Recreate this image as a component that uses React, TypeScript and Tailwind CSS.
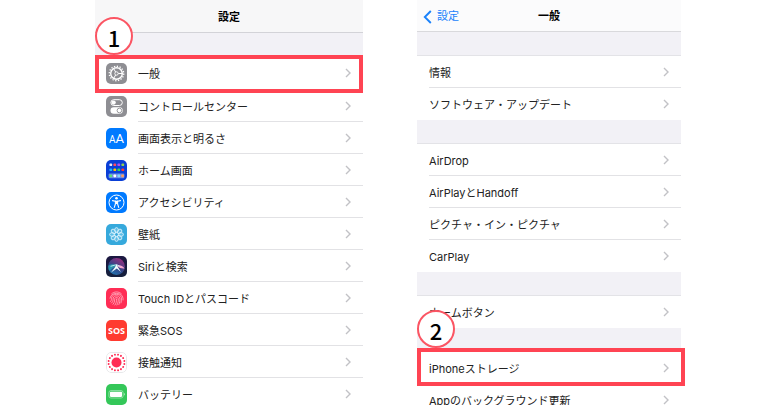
import type { ReactNode } from "react"
import clsx from "clsx"

const GearIcon = () => (
  <svg viewBox="0 0 21 21" className="size-full" fill="none" stroke="#fff">
    <rect width="21" height="21" fill="#8e8e93" stroke="none" />
    <circle cx="10.5" cy="10.5" r="7.2" strokeWidth="1.4" strokeDasharray="1.3 1.53" />
    <circle cx="10.5" cy="10.5" r="5.8" strokeWidth="1.4" />
    <circle cx="10.5" cy="10.5" r="1.7" strokeWidth="0.9" />
    <path d="M12.3 10.5h4M9.6 9 7.6 5.5M9.6 12l-2 3.5" strokeWidth="1" />
  </svg>
)

const TogglesIcon = () => (
  <svg viewBox="0 0 21 21" className="size-full" fill="none">
    <rect width="21" height="21" fill="#8e8e93" />
    <rect x="4.9" y="3.7" width="11.4" height="5.8" rx="2.9" stroke="#fff" strokeWidth="1" />
    <circle cx="7.7" cy="6.6" r="2.1" fill="#fff" />
    <rect x="4.5" y="11.2" width="12.2" height="6.6" rx="3.3" fill="#fff" />
    <circle cx="13.4" cy="14.5" r="2.3" stroke="#8e8e93" strokeWidth="0.9" />
  </svg>
)

const DisplayIcon = () => (
  <span className="flex size-full items-baseline justify-center bg-[#007aff] font-['Roboto',sans-serif] leading-[22px] text-white">
    <span className="text-[10px]">A</span>
    <span className="text-[13px]">A</span>
  </span>
)

const homeDots = [
  ["#e8e6f5", "#ff4a5e", "#b44df0", "#8fd14f"],
  ["#19b5fe", "#ffc400", "#35d05f", "#ff3b30"],
]

const HomeIcon = () => (
  <svg viewBox="0 0 21 21" className="size-full">
    <rect width="21" height="21" fill="#0a3fd6" />
    {homeDots.map((row, y) =>
      row.map((color, x) => (
        <rect key={`${x}-${y}`} x={3.5 + x * 4} y={3.5 + y * 5} width="2.6" height="2.6" rx="0.7" fill={color} />
      ))
    )}
    <rect x="2.6" y="13.6" width="15.8" height="4.6" rx="1.2" fill="#6f8fe8" />
    <rect x="3.5" y="14.6" width="2.6" height="2.6" rx="0.7" fill="#5ee07a" />
    <rect x="7.5" y="14.6" width="2.6" height="2.6" rx="0.7" fill="#fff" />
    <rect x="11.5" y="14.6" width="2.6" height="2.6" rx="0.7" fill="#7fd4ff" />
    <rect x="15.3" y="14.6" width="2.6" height="2.6" rx="0.7" fill="#ff9d5c" />
  </svg>
)

const AccessibilityIcon = () => (
  <svg viewBox="0 0 21 21" className="size-full" fill="none" stroke="#fff">
    <rect width="21" height="21" fill="#007aff" stroke="none" />
    <circle cx="10.5" cy="10.5" r="7.5" strokeWidth="1" />
    <circle cx="10.5" cy="6.3" r="1.3" fill="#fff" stroke="none" />
    <path d="M6.5 8.6 9.4 9.2h2.2l2.9-.6" strokeWidth="1.1" strokeLinecap="round" />
    <path d="M9.4 9v3L8.3 15.4M11.6 9v3l1.1 3.4" strokeWidth="1.1" strokeLinecap="round" />
    <path d="M10.5 9v3" strokeWidth="1.6" />
  </svg>
)

const WallpaperIcon = () => (
  <svg viewBox="0 0 21 21" className="size-full" fill="none" stroke="#e9f8ff">
    <rect width="21" height="21" fill="#36a9dc" stroke="none" />
    {[0, 45, 90, 135, 180, 225, 270, 315].map((angle) => (
      <ellipse
        key={angle}
        cx="10.5"
        cy="6.2"
        rx="1.9"
        ry="2.6"
        fill="#8fd3f0"
        fillOpacity="0.45"
        strokeWidth="0.8"
        transform={`rotate(${angle} 10.5 10.5)`}
      />
    ))}
    <circle cx="10.5" cy="10.5" r="1.9" strokeWidth="0.8" fill="#36a9dc" />
  </svg>
)

const SiriIcon = () => (
  <svg viewBox="0 0 21 21" className="size-full" fill="none">
    <defs>
      <linearGradient id="siri-bg" x1="0" y1="0" x2="0" y2="1">
        <stop offset="0" stopColor="#1c1741" />
        <stop offset="1" stopColor="#15203c" />
      </linearGradient>
      <linearGradient id="siri-orb" x1="0.2" y1="1" x2="0.8" y2="0">
        <stop offset="0" stopColor="#1f8fd0" />
        <stop offset="0.45" stopColor="#3a4f9c" />
        <stop offset="1" stopColor="#c0308c" />
      </linearGradient>
    </defs>
    <rect width="21" height="21" fill="url(#siri-bg)" />
    <circle cx="10.5" cy="10.5" r="8.4" fill="url(#siri-orb)" fillOpacity="0.8" />
    <path d="M2.6 9.4C6 7.6 9 8 10.6 10.2 8 11 4.5 13.6 3.2 14.6 2.3 13 2.2 11 2.6 9.4Z" fill="#27c3c0" fillOpacity="0.6" />
    <path d="M11 9.8C14 8.4 17 10.4 18.6 12.4 16.2 12.6 13.5 12.4 11 9.8Z" fill="#f7a6cf" />
    <path d="M10.6 8.2 12 11.2 15 16 10.8 12.6 5 16.6 8.8 11.6Z" fill="#effcff" />
    <path d="M4.6 10.3 10.6 8.6 13.6 10.2" stroke="#c8f5f5" strokeWidth="0.9" />
  </svg>
)

const TouchIdIcon = () => (
  <svg viewBox="0 0 21 21" className="size-full" fill="none" stroke="#ffb3c3" strokeWidth="0.8" strokeLinecap="round">
    <rect width="21" height="21" fill="#ff2d55" stroke="none" />
    <path d="M5.6 5.8C8.3 3.2 12.7 3.2 15.4 5.8" />
    <path d="M4 10.2C4.6 3.6 16.4 3.6 17 10.2V12" />
    <path d="M4.4 13.6C6 12.2 5.3 10.7 5.6 9.6 6.6 5.2 14.4 5.2 15.4 9.6 15.7 11.4 15.5 13.2 15 14.9" />
    <path d="M5.6 15C7.7 13 6.9 11.2 7.2 10 8 7.1 13 7.1 13.8 10 14.2 12.2 13.7 14.5 12.9 16.5" />
    <path d="M7 16.3C9.3 14 8.3 11.7 8.8 10.5 9.5 9 11.6 9 12.2 10.5 12.6 12.7 12 15 10.9 17" />
    <path d="M10.5 11C10.7 13.5 10.1 15.4 8.9 17" />
  </svg>
)

const SosIcon = () => (
  <span className="flex size-full items-center justify-center bg-[#ff3b30] font-['Open_Sans',sans-serif] text-[9px] font-bold leading-none text-white">
    SOS
  </span>
)

const ExposureIcon = () => (
  <svg viewBox="0 0 21 21" className="size-full">
    <rect x="0.5" y="0.5" width="20" height="20" rx="4.5" fill="#fff" stroke="#e8e8ea" />
    <circle cx="10.5" cy="10.5" r="5" fill="#ff2d55" />
    {Array.from({ length: 16 }, (_, i) => (
      <circle key={i} cx="10.5" cy="2.5" r="1" fill="#ff2d55" transform={`rotate(${i * 22.5 + 11.25} 10.5 10.5)`} />
    ))}
  </svg>
)

const BatteryIcon = () => (
  <svg viewBox="0 0 21 21" className="size-full">
    <rect width="21" height="21" fill="#34c759" />
    <rect x="2.9" y="6.6" width="14.2" height="7.4" rx="2" fill="none" stroke="#a5e6b5" strokeWidth="0.8" />
    <rect x="4" y="7.7" width="12" height="5.2" rx="0.8" fill="#fff" />
    <path d="M18 9v2.6c1.3-.4 1.3-2.2 0-2.6Z" fill="#a5e6b5" />
  </svg>
)

const Chevron = () => (
  <svg viewBox="0 0 6 10" className="h-2.5 w-1.5 shrink-0" fill="none" stroke="#c2c2c6" strokeWidth="1.4">
    <path d="M1 1l4 4-4 4" />
  </svg>
)

type Item = { label: string; icon?: ReactNode; step?: number }

const settings: Item[] = [
  { label: "一般", icon: <GearIcon />, step: 1 },
  { label: "コントロールセンター", icon: <TogglesIcon /> },
  { label: "画面表示と明るさ", icon: <DisplayIcon /> },
  { label: "ホーム画面", icon: <HomeIcon /> },
  { label: "アクセシビリティ", icon: <AccessibilityIcon /> },
  { label: "壁紙", icon: <WallpaperIcon /> },
  { label: "Siriと検索", icon: <SiriIcon /> },
  { label: "Touch IDとパスコード", icon: <TouchIdIcon /> },
  { label: "緊急SOS", icon: <SosIcon /> },
  { label: "接触通知", icon: <ExposureIcon /> },
  { label: "バッテリー", icon: <BatteryIcon /> },
]

const general: Item[][] = [
  [{ label: "情報" }, { label: "ソフトウェア・アップデート" }],
  [{ label: "AirDrop" }, { label: "AirPlayとHandoff" }, { label: "ピクチャ・イン・ピクチャ" }, { label: "CarPlay" }],
  [{ label: "ホームボタン" }],
  [{ label: "iPhoneストレージ", step: 2 }, { label: "Appのバックグラウンド更新" }],
]

// Red frame with its numbered circle sitting on the top left corner
function Callout({ step, className }: { step: number; className: string }) {
  return (
    <span className={clsx("pointer-events-none absolute z-10 border-4 border-[#ff4453]", className)}>
      <span className="absolute -left-1 bottom-full mb-1 flex size-[38px] items-center justify-center rounded-full border-2 border-[#fb5563] bg-white pt-0.5 font-['Noto_Sans_CJK_JP',sans-serif] text-[22px] font-medium leading-none text-black">
        {step}
      </span>
    </span>
  )
}

function SettingsRow({ item }: { item: Item }) {
  return (
    <li className={clsx("relative", item.step ? "h-[33px]" : "h-8")}>
      <a href="#" className="flex h-full items-stretch pl-[11px]">
        <span className="mr-[11px] size-[21px] shrink-0 self-center overflow-hidden rounded-[5px]">{item.icon}</span>
        <span className="flex flex-1 items-center justify-between border-b border-[#e2e2e5] pr-3">
          <span className="pt-[3px]">{item.label}</span>
          <Chevron />
        </span>
      </a>
      {item.step && <Callout step={item.step} className="inset-x-0 -top-0.5 -bottom-[3px]" />}
    </li>
  )
}

function GeneralRow({ item }: { item: Item }) {
  return (
    <li className="group relative h-8">
      <a href="#" className="flex h-full pl-3">
        <span className="flex flex-1 items-center justify-between border-b border-[#e2e2e5] pr-3 group-last:border-transparent">
          <span className="pt-[3px]">{item.label}</span>
          <Chevron />
        </span>
      </a>
      {item.step && <Callout step={item.step} className="-top-1 -right-1 -bottom-0.5 left-0" />}
    </li>
  )
}

export default function App() {
  return (
    <main className="grid h-screen grid-cols-[268fr_264fr] gap-[54px] overflow-hidden bg-white pr-[92px] pl-[95px] font-['Inter','Noto_Sans_CJK_JP',sans-serif] text-[11px] text-[#222]">
      {/* Settings */}
      <section>
        <header className="flex h-[33px] items-center justify-center border-b border-[#d3d3d8] bg-[#f7f7f8]">
          <h1 className="pt-0.5 font-bold text-black">設定</h1>
        </header>
        <div className="h-6 border-b border-[#d9d9de] bg-[#f2f1f6]" />
        <ul>
          {settings.map((item) => (
            <SettingsRow key={item.label} item={item} />
          ))}
        </ul>
      </section>

      {/* General */}
      <section>
        <header className="grid h-8 grid-cols-3 items-center border-b border-[#d9d9dc] bg-[#fbfbfc]">
          <a href="#" className="flex items-center gap-[5px] pt-0.5 pl-1.5 text-[#1a82fb]">
            <svg viewBox="0 0 9 14" className="h-3.5 w-[9px]" fill="none" stroke="currentColor" strokeWidth="1.9">
              <path d="M7.8 1 1.8 7l6 6" />
            </svg>
            設定
          </a>
          <h2 className="pt-0.5 text-center font-bold text-black">一般</h2>
        </header>
        {general.map((group) => (
          <div key={group[0].label}>
            <div className="h-6 border-b border-[#e3e3e7] bg-[#f2f1f6]" />
            <ul>
              {group.map((item) => (
                <GeneralRow key={item.label} item={item} />
              ))}
            </ul>
          </div>
        ))}
      </section>
    </main>
  )
}
